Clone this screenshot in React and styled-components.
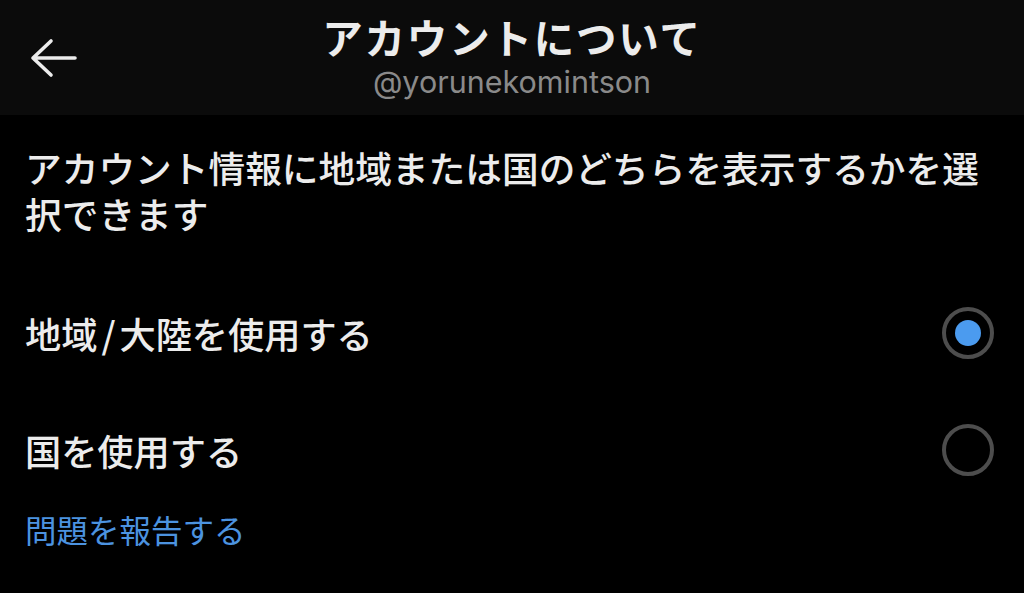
import React from "react";
import styled, { createGlobalStyle } from "styled-components";

const GlobalStyle = createGlobalStyle`
  html, body {
    margin: 0;
    padding: 0;
    background: #000;
  }
  body {
    font-family: "Noto Sans CJK JP", "Noto Sans", sans-serif;
    color: #ececec;
  }
`;

const Page = styled.div`
  width: 1024px;
  height: 593px;
  background: #000;
  overflow: hidden;
  display: flex;
  flex-direction: column;
`;

const Header = styled.header`
  height: 115px;
  background: #0b0b0b;
  display: grid;
  grid-template-columns: 110px 1fr 110px;
  align-items: start;
`;

const BackButton = styled.button`
  margin: 38px 0 0 29px;
  padding: 0;
  width: 48px;
  height: 40px;
  border: none;
  background: none;
  color: #ececec;
  display: flex;
  align-items: center;
  justify-content: flex-start;
`;

const TitleBlock = styled.div`
  display: flex;
  flex-direction: column;
  align-items: center;
  padding-top: 12px;
`;

const Title = styled.h1`
  margin: 0;
  font-family: "Noto Sans CJK JP", sans-serif;
  font-weight: 700;
  font-size: 40.5px;
  line-height: 50px;
  color: #ececec;
  letter-spacing: 1.8px;
`;

const Handle = styled.div`
  font-family: Inter, "Noto Sans", sans-serif;
  font-size: 30.5px;
  line-height: 40px;
  color: #8a8a8a;
  margin-top: 0px;
`;

const Content = styled.main`
  padding: 29px 25px 0 25px;
  display: flex;
  flex-direction: column;
`;

const Description = styled.p`
  margin: 0;
  font-size: 36.7px;
  line-height: 46px;
  font-weight: 500;
  color: #ececec;
`;

const Options = styled.div`
  margin-top: 57px;
  display: flex;
  flex-direction: column;
  gap: 37px;
`;

const OptionRow = styled.label`
  height: 80px;
  display: flex;
  align-items: center;
  justify-content: space-between;
`;

const OptionLabel = styled.span`
  font-size: 36.2px;
  font-weight: 500;
  color: #ececec;
`;

const Slash = styled.span`
  margin: 0 4px;
`;

const Radio = styled.span`
  width: 52px;
  height: 52px;
  box-sizing: border-box;
  border-radius: 50%;
  border: 4.5px solid #4d4d4d;
  margin-right: 5px;
  display: flex;
  align-items: center;
  justify-content: center;
  &::after {
    content: "";
    width: 26px;
    height: 26px;
    border-radius: 50%;
    background: ${(p) => (p.$checked ? "#4b9bef" : "transparent")};
  }
`;

const ReportLink = styled.a`
  margin-top: 19px;
  font-size: 31.5px;
  line-height: 40px;
  color: #4c93e0;
  text-decoration: none;
`;

const ArrowIcon = () => (
  <svg width="48" height="40" viewBox="0 0 48 40" fill="none">
    <path
      d="M22 3 L4 20 L22 37 M4 20 H46"
      stroke="#ececec"
      strokeWidth="3.6"
      strokeLinecap="round"
      strokeLinejoin="round"
    />
  </svg>
);

export default function App() {
  return (
    <>
      <GlobalStyle />
      <Page>
        <Header>
          <BackButton aria-label="戻る">
            <ArrowIcon />
          </BackButton>
          <TitleBlock>
            <Title>アカウントについて</Title>
            <Handle>@yorunekomintson</Handle>
          </TitleBlock>
          <div />
        </Header>
        <Content>
          <Description>
            アカウント情報に地域または国のどちらを表示するかを選択できます
          </Description>
          <Options>
            <OptionRow>
              <OptionLabel>
                地域<Slash>/</Slash>大陸を使用する
              </OptionLabel>
              <Radio $checked />
            </OptionRow>
            <OptionRow>
              <OptionLabel>国を使用する</OptionLabel>
              <Radio />
            </OptionRow>
          </Options>
          <ReportLink href="#">問題を報告する</ReportLink>
        </Content>
      </Page>
    </>
  );
}
